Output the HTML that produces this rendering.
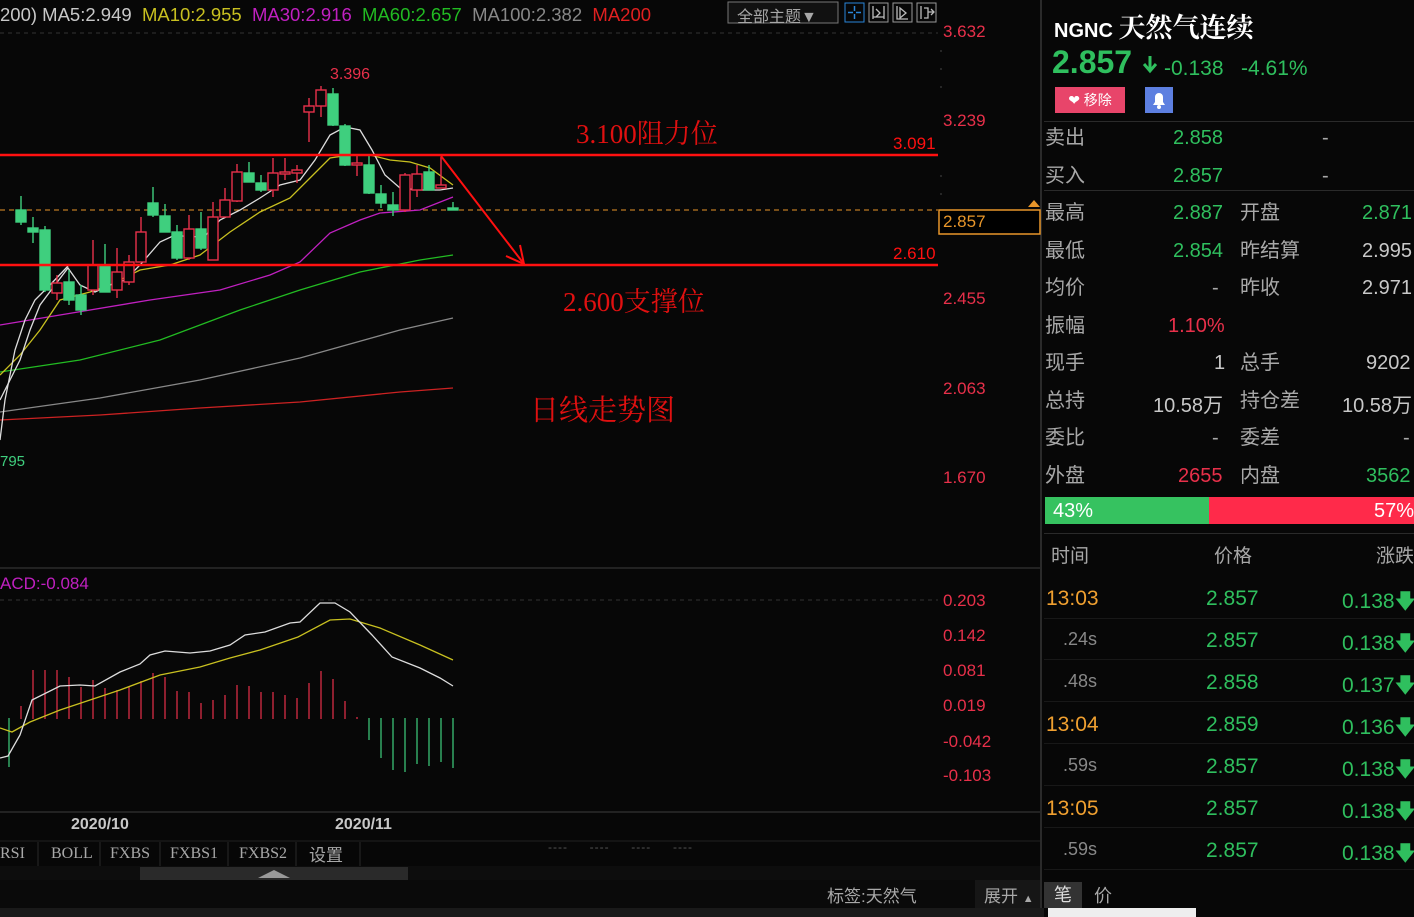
<!DOCTYPE html>
<html><head><meta charset="utf-8"><style>
body{margin:0;width:1414px;height:917px;background:#070707;overflow:hidden;font-family:"Liberation Sans","Noto Sans CJK SC",sans-serif;position:relative}
.a{position:absolute;white-space:nowrap}
.g{color:#2fbf5e}.r{color:#e8304a}.w{color:#c8c8c8}.lb{color:#a8a8a8}
.k{transform:translateY(-9px)}
.n{transform:translateY(1px)}
</style></head><body>
<svg class="a" style="left:0;top:0" width="1044" height="917">
<line x1="0" y1="33" x2="938" y2="33" stroke="#333" stroke-dasharray="4 4"/>
<line x1="0" y1="600" x2="938" y2="600" stroke="#333" stroke-dasharray="4 4"/>
<line x1="0" y1="568" x2="1040" y2="568" stroke="#222" stroke-width="2"/>
<line x1="0" y1="812" x2="1040" y2="812" stroke="#222" stroke-width="2"/>
<line x1="0" y1="841" x2="1040" y2="841" stroke="#222"/>
<line x1="1041" y1="0" x2="1041" y2="917" stroke="#2a2a2a" stroke-width="2"/>
<g stroke="#444"><line x1="941" y1="50" x2="941" y2="52"/><line x1="941" y1="68" x2="941" y2="70"/><line x1="941" y1="86" x2="941" y2="88"/><line x1="941" y1="175" x2="941" y2="177"/><line x1="941" y1="193" x2="941" y2="195"/></g>
<line x1="0" y1="210" x2="938" y2="210" stroke="#e8962a" stroke-dasharray="5 4"/>
<polyline fill="none" stroke="#cc2222" stroke-width="1.3" points="0,420 100,415 200,408 300,402 400,392 453,388"/>
<polyline fill="none" stroke="#888" stroke-width="1.3" points="0,412 100,398 200,380 300,358 400,330 453,318"/>
<polyline fill="none" stroke="#22bb22" stroke-width="1.3" points="0,372 80,360 160,340 240,310 300,290 360,272 420,260 453,255"/>
<polyline fill="none" stroke="#c020c0" stroke-width="1.3" points="0,325 60,315 150,300 220,290 270,275 300,262 330,233 360,220 380,213 420,210 453,197"/>
<polyline fill="none" stroke="#c8c020" stroke-width="1.3" points="0,375 20,355 40,330 60,300 90,292 110,285 140,270 170,265 200,255 230,232 260,212 290,198 310,178 330,158 350,155 370,155 390,160 410,162 430,168 453,185"/>
<polyline fill="none" stroke="#dddddd" stroke-width="1.3" points="0,400 10,380 20,360 30,330 40,305 55,285 68,268 80,285 95,292 110,285 125,280 140,265 160,242 175,235 190,237 205,236 220,220 240,210 260,198 280,185 300,180 315,160 330,135 345,127 360,130 372,150 385,175 400,188 420,190 440,190 453,188"/>
<polyline fill="none" stroke="#dddddd" stroke-width="1.3" points="0,440 5,400 15,350 25,320 35,300 50,285 68,266"/>
<g stroke-width="1.4">
<g stroke="#3fcf7e" fill="#3fcf7e">
<line x1="21" y1="196" x2="21" y2="225"/><rect x="16" y="210" width="10" height="12"/>
<line x1="33" y1="217" x2="33" y2="243"/><rect x="28" y="228" width="10" height="4"/>
<line x1="45" y1="226" x2="45" y2="292"/><rect x="40" y="230" width="10" height="60"/>
<line x1="69" y1="270" x2="69" y2="305"/><rect x="64" y="282" width="10" height="18"/>
<line x1="81" y1="285" x2="81" y2="315"/><rect x="76" y="295" width="10" height="15"/>
<line x1="105" y1="244" x2="105" y2="292"/><rect x="100" y="266" width="10" height="26"/>
<line x1="153" y1="187" x2="153" y2="217"/><rect x="148" y="203" width="10" height="12"/>
<line x1="165" y1="204" x2="165" y2="232"/><rect x="160" y="216" width="10" height="16"/>
<line x1="177" y1="225" x2="177" y2="260"/><rect x="172" y="232" width="10" height="26"/>
<line x1="201" y1="212" x2="201" y2="250"/><rect x="196" y="229" width="10" height="19"/>
<line x1="249" y1="162" x2="249" y2="182"/><rect x="244" y="173" width="10" height="9"/>
<line x1="261" y1="175" x2="261" y2="192"/><rect x="256" y="183" width="10" height="7"/>
<line x1="333" y1="88" x2="333" y2="126"/><rect x="328" y="94" width="10" height="31"/>
<line x1="345" y1="124" x2="345" y2="166"/><rect x="340" y="126" width="10" height="39"/>
<line x1="369" y1="155" x2="369" y2="194"/><rect x="364" y="165" width="10" height="28"/>
<line x1="381" y1="185" x2="381" y2="208"/><rect x="376" y="194" width="10" height="9"/>
<line x1="393" y1="192" x2="393" y2="216"/><rect x="388" y="205" width="10" height="5"/>
<line x1="429" y1="165" x2="429" y2="190"/><rect x="424" y="172" width="10" height="18"/>
<line x1="453" y1="202" x2="453" y2="210"/><rect x="448" y="208" width="10" height="2"/>
</g>
<g stroke="#e8304a" fill="#070707">
<line x1="57" y1="275" x2="57" y2="300"/><rect x="52" y="283" width="10" height="10"/>
<line x1="93" y1="240" x2="93" y2="295"/><rect x="88" y="265" width="10" height="25"/>
<line x1="117" y1="248" x2="117" y2="298"/><rect x="112" y="272" width="10" height="18"/>
<line x1="129" y1="255" x2="129" y2="285"/><rect x="124" y="262" width="10" height="20"/>
<line x1="141" y1="217" x2="141" y2="262"/><rect x="136" y="232" width="10" height="30"/>
<line x1="189" y1="215" x2="189" y2="260"/><rect x="184" y="229" width="10" height="29"/>
<line x1="213" y1="202" x2="213" y2="260"/><rect x="208" y="217" width="10" height="43"/>
<line x1="225" y1="188" x2="225" y2="217"/><rect x="220" y="200" width="10" height="17"/>
<line x1="237" y1="164" x2="237" y2="202"/><rect x="232" y="172" width="10" height="29"/>
<line x1="273" y1="158" x2="273" y2="197"/><rect x="268" y="173" width="10" height="17"/>
<line x1="285" y1="158" x2="285" y2="180"/><rect x="280" y="172" width="10" height="2"/>
<line x1="297" y1="165" x2="297" y2="183"/><rect x="292" y="170" width="10" height="3"/>
<line x1="309" y1="98" x2="309" y2="142"/><rect x="304" y="106" width="10" height="6"/>
<line x1="321" y1="86" x2="321" y2="117"/><rect x="316" y="90" width="10" height="16"/>
<line x1="357" y1="155" x2="357" y2="176"/><rect x="352" y="163" width="10" height="2"/>
<line x1="405" y1="173" x2="405" y2="212"/><rect x="400" y="175" width="10" height="35"/>
<line x1="417" y1="165" x2="417" y2="197"/><rect x="412" y="174" width="10" height="16"/>
<line x1="441" y1="157" x2="441" y2="188"/><rect x="436" y="185" width="10" height="3"/>
</g></g>
<line x1="0" y1="155" x2="938" y2="155" stroke="#ff1010" stroke-width="2.5"/>
<line x1="0" y1="265" x2="938" y2="265" stroke="#ff1010" stroke-width="2.5"/>
<polyline fill="none" stroke="#ff1010" stroke-width="2" points="441,156 524,264"/>
<polyline fill="none" stroke="#ff1010" stroke-width="2" points="506,256 524,264 520,245"/>
<g stroke="#e8304a" stroke-width="1.2">
<line x1="21" y1="706" x2="21" y2="719"/><line x1="33" y1="670" x2="33" y2="719"/><line x1="45" y1="670" x2="45" y2="719"/><line x1="57" y1="670" x2="57" y2="719"/><line x1="69" y1="677" x2="69" y2="719"/><line x1="81" y1="687" x2="81" y2="719"/><line x1="93" y1="680" x2="93" y2="719"/><line x1="105" y1="688" x2="105" y2="719"/><line x1="117" y1="690" x2="117" y2="719"/><line x1="129" y1="687" x2="129" y2="719"/><line x1="141" y1="681" x2="141" y2="719"/><line x1="153" y1="673" x2="153" y2="719"/><line x1="165" y1="677" x2="165" y2="719"/><line x1="177" y1="691" x2="177" y2="719"/><line x1="189" y1="692" x2="189" y2="719"/><line x1="201" y1="703" x2="201" y2="719"/><line x1="213" y1="700" x2="213" y2="719"/><line x1="225" y1="695" x2="225" y2="719"/><line x1="237" y1="685" x2="237" y2="719"/><line x1="249" y1="686" x2="249" y2="719"/><line x1="261" y1="692" x2="261" y2="719"/><line x1="273" y1="692" x2="273" y2="719"/><line x1="285" y1="695" x2="285" y2="719"/><line x1="297" y1="698" x2="297" y2="719"/><line x1="309" y1="683" x2="309" y2="719"/><line x1="321" y1="671" x2="321" y2="719"/><line x1="333" y1="679" x2="333" y2="719"/><line x1="345" y1="701" x2="345" y2="719"/><line x1="357" y1="717" x2="357" y2="719"/>
</g>
<g stroke="#3fcf7e" stroke-width="1.2">
<line x1="9" y1="718" x2="9" y2="767"/><line x1="369" y1="718" x2="369" y2="740"/><line x1="381" y1="718" x2="381" y2="758"/><line x1="393" y1="718" x2="393" y2="770"/><line x1="405" y1="718" x2="405" y2="772"/><line x1="417" y1="718" x2="417" y2="764"/><line x1="429" y1="718" x2="429" y2="766"/><line x1="441" y1="718" x2="441" y2="762"/><line x1="453" y1="718" x2="453" y2="768"/>
</g>
<polyline fill="none" stroke="#c8c020" stroke-width="1.3" points="0,728 12,732 30,722 60,710 90,700 120,690 160,675 200,667 230,658 260,650 298,637 330,620 350,619 380,628 420,645 453,660"/>
<polyline fill="none" stroke="#dddddd" stroke-width="1.3" points="0,758 8,756 20,735 32,700 60,686 80,685 95,686 120,672 140,664 150,655 165,651 190,653 210,651 230,645 245,635 265,632 290,623 300,622 320,603 335,603 350,612 372,635 392,657 420,668 440,678 453,686"/>
<rect x="0" y="866" width="1040" height="14" fill="#0d0d0d"/>
<rect x="140" y="867" width="268" height="13" fill="#2a2a2a"/>
<polygon points="258,878 274,870 290,878" fill="#9a9a9a"/>
<rect x="0" y="880" width="1040" height="28" fill="#0a0a0a"/>
<rect x="975" y="880" width="65" height="28" fill="#161616"/>
<rect x="0" y="908" width="1414" height="9" fill="#1a1a1a"/>
<g stroke="#2a2a2a"><line x1="38" y1="842" x2="38" y2="866"/><line x1="100" y1="842" x2="100" y2="866"/><line x1="160" y1="842" x2="160" y2="866"/><line x1="228" y1="842" x2="228" y2="866"/><line x1="296" y1="842" x2="296" y2="866"/><line x1="360" y1="842" x2="360" y2="866"/></g>
<rect x="728" y="2" width="110" height="21" fill="#111" stroke="#777"/>
<rect x="845" y="3" width="19" height="19" fill="none" stroke="#2a86d8"/>
<rect x="869" y="3" width="19" height="19" fill="none" stroke="#999"/>
<rect x="893" y="3" width="19" height="19" fill="none" stroke="#999"/>
<rect x="917" y="3" width="19" height="19" fill="none" stroke="#999"/>
<g stroke="#2a86d8" stroke-width="1.5"><line x1="854.5" y1="6" x2="854.5" y2="11"/><line x1="854.5" y1="14" x2="854.5" y2="19"/><line x1="848" y1="12.5" x2="853" y2="12.5"/><line x1="856" y1="12.5" x2="861" y2="12.5"/></g>
<g stroke="#bbb" stroke-width="1.3" fill="none"><path d="M873 6v13M884 6v13M873 17h11M876 9l4 4-4 4"/><path d="M897 6v13h11M900 8l6 5-6 5z"/><path d="M921 6v13M924 8h4v10h-4M928 12h6M931 9l3 3-3 3"/></g>
<rect x="939" y="210" width="101" height="24" fill="#000" stroke="#e8962a" stroke-width="1.5"/>
<polygon points="1028,207 1034,200 1040,207" fill="#e8962a"/>
</svg>

<div class="a" style="left:0;top:4px;font-size:18.5px"><span class="w">200) MA5:2.949</span>&nbsp;&nbsp;<span style="color:#c8c020">MA10:2.955</span>&nbsp;&nbsp;<span style="color:#c020c0">MA30:2.916</span>&nbsp;&nbsp;<span style="color:#22bb22">MA60:2.657</span>&nbsp;&nbsp;<span style="color:#888">MA100:2.382</span>&nbsp;&nbsp;<span style="color:#e02020">MA200</span></div>
<div class="a lb" style="left:737px;top:3px;font-size:16px">全部主题▼</div>
<div class="a r" style="left:330px;top:66px;font-size:16px">3.396</div>
<div class="a" style="left:0;top:453px;font-size:15px;color:#3fcf7e">795</div>
<div class="a" style="left:576px;top:112px;font-size:27px;color:#e01010;font-family:'Liberation Serif','Noto Serif CJK SC',serif">3.100阻力位</div>
<div class="a" style="left:563px;top:280px;font-size:27px;color:#e01010;font-family:'Liberation Serif','Noto Serif CJK SC',serif">2.600支撑位</div>
<div class="a" style="left:530px;top:388px;font-size:29px;color:#e01010;font-family:'Liberation Serif','Noto Serif CJK SC',serif">日线走势图</div>
<div class="a" style="left:893px;top:134px;font-size:17px;color:#ff1010">3.091</div>
<div class="a" style="left:893px;top:244px;font-size:17px;color:#ff1010">2.610</div>
<div class="a r" style="left:943px;top:22px;font-size:17px">3.632</div>
<div class="a r" style="left:943px;top:111px;font-size:17px">3.239</div>
<div class="a" style="left:943px;top:212px;font-size:17px;color:#e8962a">2.857</div>
<div class="a r" style="left:943px;top:289px;font-size:17px">2.455</div>
<div class="a r" style="left:943px;top:379px;font-size:17px">2.063</div>
<div class="a r" style="left:943px;top:468px;font-size:17px">1.670</div>
<div class="a" style="left:0;top:574px;font-size:17px;color:#c020c0">ACD:-0.084</div>
<div class="a r" style="left:943px;top:591px;font-size:17px">0.203</div>
<div class="a r" style="left:943px;top:626px;font-size:17px">0.142</div>
<div class="a r" style="left:943px;top:661px;font-size:17px">0.081</div>
<div class="a r" style="left:943px;top:696px;font-size:17px">0.019</div>
<div class="a r" style="left:943px;top:732px;font-size:17px">-0.042</div>
<div class="a r" style="left:943px;top:766px;font-size:17px">-0.103</div>
<div class="a w" style="left:71px;top:816px;font-size:16px;font-weight:bold">2020/10</div>
<div class="a w" style="left:335px;top:816px;font-size:16px;font-weight:bold">2020/11</div>
<div class="a lb" style="left:0;top:845px;font-size:16px;font-family:'Liberation Serif','Noto Serif CJK SC',serif">RSI</div>
<div class="a lb" style="left:51px;top:845px;font-size:16px;font-family:'Liberation Serif','Noto Serif CJK SC',serif">BOLL</div>
<div class="a lb" style="left:110px;top:845px;font-size:16px;font-family:'Liberation Serif','Noto Serif CJK SC',serif">FXBS</div>
<div class="a lb" style="left:170px;top:845px;font-size:16px;font-family:'Liberation Serif','Noto Serif CJK SC',serif">FXBS1</div>
<div class="a lb" style="left:239px;top:845px;font-size:16px;font-family:'Liberation Serif','Noto Serif CJK SC',serif">FXBS2</div>
<div class="a lb" style="left:309px;top:841px;font-size:17px">设置</div>
<div class="a" style="left:548px;top:840px;font-size:12px;color:#555;letter-spacing:1px">----&nbsp;&nbsp;&nbsp;&nbsp;&nbsp;----&nbsp;&nbsp;&nbsp;&nbsp;&nbsp;----&nbsp;&nbsp;&nbsp;&nbsp;&nbsp;----</div>
<div class="a lb" style="left:827px;top:882px;font-size:17px">标签:天然气</div>
<div class="a lb" style="left:984px;top:882px;font-size:17px">展开 <span style="font-size:11px">▲</span></div>

<div class="a" style="left:1054px;top:6px;font-size:20px;color:#fff;font-weight:bold">NGNC <span style="font-family:'Noto Serif CJK SC',serif;font-size:27px;font-weight:bold">天然气连续</span></div>
<div class="a g" style="left:1052px;top:44px;font-size:32px;font-weight:bold">2.857</div>
<svg class="a" style="left:1142px;top:54px" width="16" height="20"><path d="M8 2v14M2 10l6 7 6-7" stroke="#2fbf5e" stroke-width="3" fill="none"/></svg>
<div class="a g" style="left:1164px;top:57px;font-size:21px">-0.138&nbsp;&nbsp;&nbsp;-4.61%</div>
<div class="a" style="left:1055px;top:87px;width:70px;height:26px;background:#e8456a;color:#fff;font-size:14px;line-height:26px;text-align:center">❤ 移除</div>
<div class="a" style="left:1145px;top:87px;width:28px;height:26px;background:#5d7fe0"></div>
<svg class="a" style="left:1145px;top:87px" width="28" height="26"><path d="M8 18h12l-2-3v-5a4 4 0 0 0-8 0v5z" fill="#fff"/><circle cx="14" cy="20" r="2" fill="#fff"/></svg>
<div class="a" style="left:1044px;top:121px;width:370px;height:1px;background:#2a2a2a"></div>
<div class="a" style="left:1044px;top:190px;width:370px;height:1px;background:#2a2a2a"></div>
<div style="font-size:20px">
<div class="a lb k" style="left:1045px;top:130px">卖出</div><div class="a g n" style="left:1173px;top:126px">2.858</div><div class="a lb n" style="left:1322px;top:126px">-</div>
<div class="a lb k" style="left:1045px;top:168px">买入</div><div class="a g n" style="left:1173px;top:164px">2.857</div><div class="a lb n" style="left:1322px;top:164px">-</div>
<div class="a lb k" style="left:1045px;top:205px">最高</div><div class="a g n" style="left:1173px;top:201px">2.887</div><div class="a lb k" style="left:1240px;top:205px">开盘</div><div class="a g n" style="left:1362px;top:201px">2.871</div>
<div class="a lb k" style="left:1045px;top:243px">最低</div><div class="a g n" style="left:1173px;top:239px">2.854</div><div class="a lb k" style="left:1240px;top:243px">昨结算</div><div class="a w n" style="left:1362px;top:239px">2.995</div>
<div class="a lb k" style="left:1045px;top:280px">均价</div><div class="a lb n" style="left:1212px;top:276px">-</div><div class="a lb k" style="left:1240px;top:280px">昨收</div><div class="a w n" style="left:1362px;top:276px">2.971</div>
<div class="a lb k" style="left:1045px;top:318px">振幅</div><div class="a r n" style="left:1168px;top:314px">1.10%</div>
<div class="a lb k" style="left:1045px;top:355px">现手</div><div class="a w n" style="left:1214px;top:351px">1</div><div class="a lb k" style="left:1240px;top:355px">总手</div><div class="a w n" style="left:1366px;top:351px">9202</div>
<div class="a lb k" style="left:1045px;top:393px">总持</div><div class="a w" style="left:1153px;top:389px">10.58万</div><div class="a lb k" style="left:1240px;top:393px">持仓差</div><div class="a w" style="left:1342px;top:389px">10.58万</div>
<div class="a lb k" style="left:1045px;top:430px">委比</div><div class="a lb n" style="left:1212px;top:426px">-</div><div class="a lb k" style="left:1240px;top:430px">委差</div><div class="a lb n" style="left:1403px;top:426px">-</div>
<div class="a lb k" style="left:1045px;top:468px">外盘</div><div class="a r n" style="left:1178px;top:464px">2655</div><div class="a lb k" style="left:1240px;top:468px">内盘</div><div class="a g n" style="left:1366px;top:464px">3562</div>
</div>
<div class="a" style="left:1045px;top:497px;width:164px;height:27px;background:#36c260;color:#fff;font-size:20px;line-height:28px;padding-left:8px;box-sizing:border-box">43%</div>
<div class="a" style="left:1209px;top:497px;width:205px;height:27px;background:#ff2a4a;color:#fff;font-size:20px;line-height:28px;text-align:right;box-sizing:border-box">57%</div>
<div class="a" style="left:1044px;top:533px;width:370px;height:1px;background:#2a2a2a"></div>
<div class="a lb" style="left:1051px;top:541px;font-size:19px">时间</div>
<div class="a lb" style="left:1214px;top:541px;font-size:19px">价格</div>
<div class="a lb" style="left:1376px;top:541px;font-size:19px">涨跌</div>
<div style="font-size:21px">
<div class="a" style="left:1046px;top:587px;color:#f0a030">13:03</div><div class="a g" style="left:1206px;top:587px">2.857</div><div class="a g" style="left:1342px;top:587px">0.138🡇</div>
<div class="a" style="left:1063px;top:629px;color:#888;font-size:18px">.24s</div><div class="a g" style="left:1206px;top:629px">2.857</div><div class="a g" style="left:1342px;top:629px">0.138🡇</div>
<div class="a" style="left:1063px;top:671px;color:#888;font-size:18px">.48s</div><div class="a g" style="left:1206px;top:671px">2.858</div><div class="a g" style="left:1342px;top:671px">0.137🡇</div>
<div class="a" style="left:1046px;top:713px;color:#f0a030">13:04</div><div class="a g" style="left:1206px;top:713px">2.859</div><div class="a g" style="left:1342px;top:713px">0.136🡇</div>
<div class="a" style="left:1063px;top:755px;color:#888;font-size:18px">.59s</div><div class="a g" style="left:1206px;top:755px">2.857</div><div class="a g" style="left:1342px;top:755px">0.138🡇</div>
<div class="a" style="left:1046px;top:797px;color:#f0a030">13:05</div><div class="a g" style="left:1206px;top:797px">2.857</div><div class="a g" style="left:1342px;top:797px">0.138🡇</div>
<div class="a" style="left:1063px;top:839px;color:#888;font-size:18px">.59s</div><div class="a g" style="left:1206px;top:839px">2.857</div><div class="a g" style="left:1342px;top:839px">0.138🡇</div>
</div>
<div class="a" style="left:1044px;top:618px;width:370px;height:1px;background:#181818"></div>
<div class="a" style="left:1044px;top:659px;width:370px;height:1px;background:#181818"></div>
<div class="a" style="left:1044px;top:701px;width:370px;height:1px;background:#181818"></div>
<div class="a" style="left:1044px;top:743px;width:370px;height:1px;background:#181818"></div>
<div class="a" style="left:1044px;top:785px;width:370px;height:1px;background:#181818"></div>
<div class="a" style="left:1044px;top:827px;width:370px;height:1px;background:#181818"></div>
<div class="a" style="left:1044px;top:869px;width:370px;height:1px;background:#181818"></div>
<div class="a" style="left:1044px;top:882px;width:38px;height:26px;background:#333;color:#ddd;font-size:18px;line-height:26px;text-align:center">笔</div>
<div class="a lb" style="left:1094px;top:882px;font-size:18px">价</div>
<div class="a" style="left:1048px;top:908px;width:148px;height:9px;background:#eee"></div>
</body></html>
